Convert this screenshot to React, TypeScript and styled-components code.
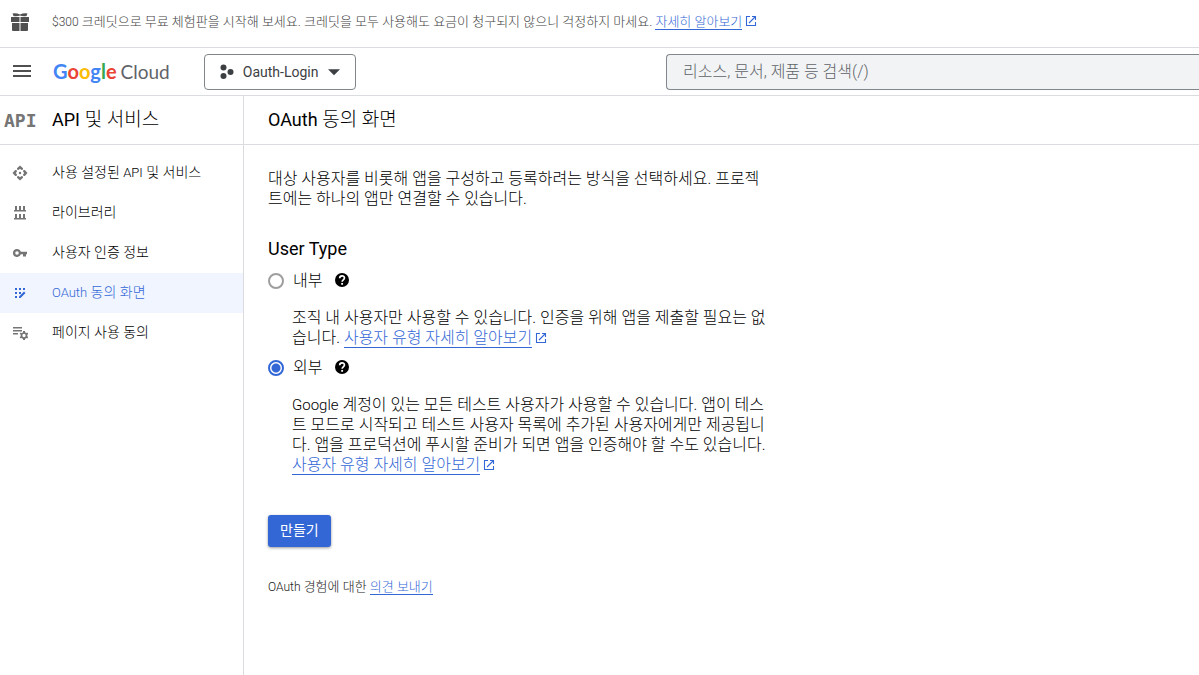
import React from "react";
import styled, { createGlobalStyle } from "styled-components";

const blue = "#3367d6";
const line = "#dadce0";

const GlobalStyle = createGlobalStyle`
  *, *::before, *::after { box-sizing: border-box; }
  body {
    margin: 0;
    background: #fff;
    color: #000;
    font-family: Roboto, "Noto Sans CJK KR", sans-serif;
    font-size: 16px;
    font-weight: 300;
    line-height: 20px;
  }
  h1, h2, p, ul { margin: 0; padding: 0; }
  svg { display: block; flex: none; }
`;

const Page = styled.div`
  display: flex;
  flex-direction: column;
  min-height: 100vh;
`;

const Banner = styled.div`
  display: flex;
  align-items: center;
  height: 48px;
  padding: 0 10px 4px;
  gap: 22px;
  border-bottom: 1px solid ${line};
  color: #424242;
  font-size: 13px;
`;

const Latin = styled.span<{ $size: number; $weight?: number }>`
  font-size: ${(p) => p.$size}px;
  font-weight: ${(p) => p.$weight ?? 300};
`;

const Link = styled.a`
  color: ${blue};
  text-decoration: none;
  span {
    border-bottom: 1px solid ${blue};
  }
  svg {
    display: inline-block;
    margin-left: 3px;
    vertical-align: -1px;
  }
`;

const Header = styled.header`
  display: flex;
  align-items: center;
  height: 48px;
  border-bottom: 1px solid ${line};
`;

const HeaderStart = styled.div`
  display: flex;
  flex: 5 0 0;
  align-items: center;
`;

const IconButton = styled.button`
  margin-left: 10px;
  padding: 0;
  border: 0;
  background: none;
  color: #505050;
`;

const Logo = styled.a`
  display: flex;
  align-items: baseline;
  gap: 4px;
  margin: 0 34px 0 19px;
  color: #5f6368;
  font-family: Lato, sans-serif;
  font-size: 19px;
  font-weight: 400;
  line-height: 24px;
  text-decoration: none;
`;

const Brand = styled.span`
  font-size: 20px;
  font-weight: 700;
`;

const Tint = styled.span<{ $color: string }>`
  color: ${(p) => p.$color};
`;

const ProjectButton = styled.button`
  display: flex;
  align-items: center;
  height: 36px;
  padding: 0 13px 0 14px;
  border: 1px solid #80868b;
  border-radius: 4px;
  background: #fff;
  color: #3c4043;
  font: 400 14px Roboto, sans-serif;
  gap: 8px;
`;

const SearchForm = styled.form`
  flex: 4 0 0;
`;

const Search = styled.input`
  display: block;
  width: 100%;
  height: 36px;
  padding: 0 16px;
  border: 1px solid #80868b;
  border-right: 0;
  border-radius: 4px 0 0 4px;
  background: #f1f3f4;
  font: 300 16px Roboto, "Noto Sans CJK KR", sans-serif;
  &::placeholder { color: #5f6368; opacity: 1; }
`;

const Body = styled.div`
  display: flex;
  flex: 1;
`;

const Sidebar = styled.nav`
  flex: none;
  width: 244px;
  border-right: 1px solid ${line};
`;

const TitleBar = styled.div`
  display: flex;
  align-items: center;
  height: 49px;
  border-bottom: 1px solid ${line};
`;

const SectionIcon = styled.span`
  width: 52px;
  padding-left: 4px;
  color: #757575;
  font: 700 18px "DejaVu Sans Mono", monospace;
`;

const Title = styled.h1`
  padding-left: 24px;
  font-size: 19px;
  font-weight: 300;
`;

const SectionTitle = styled.h2`
  font-size: 19px;
  font-weight: 300;
`;

const NavList = styled.ul`
  padding-top: 8px;
  list-style: none;
`;

const NavLink = styled.a<{ $active?: boolean }>`
  display: flex;
  align-items: center;
  height: 40px;
  padding-left: 12px;
  gap: 24px;
  background: ${(p) => (p.$active ? "#f0f5ff" : "transparent")};
  color: ${(p) => (p.$active ? blue : "#000")};
  font-size: 14px;
  text-decoration: none;
  svg { color: ${(p) => (p.$active ? blue : "#757575")}; }
`;

const NavLabel = styled.span`
  padding-bottom: 2px;
`;

const Main = styled.main`
  flex: 1;
`;

const Content = styled.form`
  max-width: 552px;
  padding: 24px;
`;

const UserTypeGroup = styled.fieldset`
  margin: 29px 0 0;
  padding: 0;
  border: 0;
`;

const Legend = styled.legend`
  padding: 0;
  font-size: 18px;
  font-weight: 400;
  line-height: 22px;
`;

const Option = styled.div`
  display: flex;
  align-items: center;
  height: 28px;
  margin-top: 6px;
  ${Legend} + & { margin-top: 7px; }
`;

const Radio = styled.input`
  appearance: none;
  width: 16px;
  height: 16px;
  margin: 0;
  border: 2px solid #9e9e9e;
  border-radius: 50%;
  &:checked {
    border-color: ${blue};
    background: radial-gradient(circle, ${blue} 4px, #fff 5px);
  }
`;

const OptionLabel = styled.label`
  padding: 0 13px 0 9px;
`;

const HelpBadge = styled.span`
  padding-bottom: 2px;
`;

const Description = styled.p`
  margin-top: 13px;
  padding-left: 24px;
`;

const CreateButton = styled.button`
  height: 32px;
  margin-top: 40px;
  padding: 0 12px 4px;
  border: 0;
  border-radius: 3px;
  background: ${blue};
  box-shadow: 0 1px 3px rgba(0, 0, 0, 0.4);
  color: #fff;
  font: 400 14px Roboto, "Noto Sans CJK KR", sans-serif;
`;

const Feedback = styled.p`
  margin-top: 30px;
  color: #212121;
  font-size: 13px;
`;

function Svg({ size = 16, box = 24, children }: { size?: number; box?: number; children: React.ReactNode }) {
  return (
    <svg width={size} height={size} viewBox={`0 0 ${box} ${box}`} fill="currentColor" aria-hidden="true">
      {children}
    </svg>
  );
}

const ExternalIcon = () => (
  <Svg size={12} box={12}>
    <path d="M5 1.500H1.500v9h9V7M7 1.500h3.500V5M10.500 1.500 4 8" fill="none" stroke={blue} strokeWidth="1.100" />
  </Svg>
);

const GiftIcon = () => (
  <Svg size={20} box={20}>
    <path
      fill="#505050"
      d="M1 5h8.500v5H1zM10.500 5H19v5h-8.500zM2 11h7.500v8H3a1 1 0 0 1-1-1zM10.500 11H18v7a1 1 0 0 1-1 1h-6.500zM2.500 1.500Q6 .5 10 2.600 14 .5 17.500 1.500L16.500 4Q13 4.500 10 3.600 7 4.500 3.500 4z"
    />
  </Svg>
);

const HelpIcon = () => (
  <HelpBadge>
    <Svg size={14} box={20}>
      <path d="M10 0a10 10 0 1 0 0 20 10 10 0 0 0 0-20z" fill="#000" />
      <path d="M6.700 7.500C6.700 3 13.500 3 13.500 7.300 13.500 9.800 10.200 10 10.200 12.500" fill="none" stroke="#fff" strokeWidth="2.400" />
      <path d="M8.900 14.200h2.600v2.600H8.900z" fill="#fff" />
    </Svg>
  </HelpBadge>
);

const ApiIcon = () => (
  <Svg box={16}>
    <path d="M8 .5 11 3.200V4.500L9.500 5 8 3.800 6.500 5 5 4.500V3.200zM8 15.500 5 12.800V11.500L6.500 11 8 12.200 9.500 11l1.500.5v1.300zM.5 8 3.200 5H4.500L5 6.500 3.800 8 5 9.500 4.500 11H3.200zM15.500 8l-2.700 3h-1.300L11 9.500 12.200 8 11 6.500l.5-1.500h1.300z" />
    <circle cx="8" cy="8" r="1.200" />
  </Svg>
);

const LibraryIcon = () => (
  <Svg box={16}>
    <path d="M3 1h2v4h2V1h2v4h2V1h2v4h1v1.500H2V5h1zM3 9h2v4h2V9h2v4h2V9h2v4h1v1.500H2V13h1z" />
  </Svg>
);

const KeyIcon = () => (
  <Svg box={16}>
    <path d="M5 4a4 4 0 1 0 3.800 5.200H11V11.500h3V9.200h1V6.800H8.800A4 4 0 0 0 5 4zm0 2.200a1.800 1.800 0 1 1 0 3.600 1.800 1.800 0 0 1 0-3.600z" />
  </Svg>
);

const ConsentIcon = () => (
  <Svg box={16}>
    <path d="M3 3h2v2H3zM7 3h2v2H7zM11 3h2v2h-2zM3 7h2v2H3zM7 7h2v2H7zM3 11h2v2H3zM12 6.500l1.500 1.500-5 5H7v-1.500z" />
  </Svg>
);

const AgreementIcon = () => (
  <Svg box={16}>
    <path d="M1 2h9v1.600H1zM1 5h9v1.600H1zM1 8h5v1.600H1z" />
    <path d="M12 6v9M8.100 8.250l7.800 4.500M8.100 12.750l7.800-4.500" stroke="currentColor" strokeWidth="2" />
    <circle cx="12" cy="10.500" r="2.500" fill="#fff" stroke="currentColor" strokeWidth="1.700" />
  </Svg>
);

const navItems = [
  { icon: <ApiIcon />, label: <>사용 설정된 <Latin $size={13}>API</Latin> 및 서비스</> },
  { icon: <LibraryIcon />, label: "라이브러리" },
  { icon: <KeyIcon />, label: "사용자 인증 정보" },
  { icon: <ConsentIcon />, label: <><Latin $size={13}>OAuth</Latin> 동의 화면</>, active: true },
  { icon: <AgreementIcon />, label: "페이지 사용 동의" },
];

const logoLetters: [string, string][] = [
  ["G", "#4285f4"],
  ["o", "#ea4335"],
  ["o", "#fbbc04"],
  ["g", "#4285f4"],
  ["l", "#34a853"],
  ["e", "#ea4335"],
];

function ExternalLink({ children }: { children: React.ReactNode }) {
  return (
    <Link href="#">
      <span>{children}</span>
      <ExternalIcon />
    </Link>
  );
}

export default function App() {
  return (
    <Page>
      <GlobalStyle />
      <Banner>
        <GiftIcon />
        <p>
          <Latin $size={12}>$300</Latin> 크레딧으로 무료 체험판을 시작해 보세요. 크레딧을 모두 사용해도 요금이 청구되지 않으니 걱정하지 마세요.{" "}
          <ExternalLink>자세히 알아보기</ExternalLink>
        </p>
      </Banner>
      <Header>
        <HeaderStart>
          <IconButton type="button" aria-label="탐색 메뉴">
            <Svg size={24}>
              <path d="M3 5h18v2H3zm0 5h18v2H3zm0 5h18v2H3z" />
            </Svg>
          </IconButton>
          <Logo href="#">
            <Brand>
              {logoLetters.map(([letter, color], i) => (
                <Tint key={i} $color={color}>{letter}</Tint>
              ))}
            </Brand>
            <span>Cloud</span>
          </Logo>
          <ProjectButton type="button">
            <Svg box={16}>
              <circle cx="4.500" cy="3.500" r="3" />
              <circle cx="4.500" cy="12" r="3" />
              <circle cx="11.500" cy="8" r="3" />
            </Svg>
            Oauth-Login
            <Svg>
              <path d="M3 8h18l-9 9z" />
            </Svg>
          </ProjectButton>
        </HeaderStart>
        <SearchForm role="search">
          <Search type="search" aria-label="검색" placeholder="리소스, 문서, 제품 등 검색(/)" />
        </SearchForm>
      </Header>
      <Body>
        <Sidebar>
          <TitleBar>
            <SectionIcon aria-hidden="true">API</SectionIcon>
            <SectionTitle><Latin $size={18} $weight={400}>API</Latin> 및 서비스</SectionTitle>
          </TitleBar>
          <NavList>
            {navItems.map((item, i) => (
              <li key={i}>
                <NavLink href="#" $active={item.active}>
                  {item.icon}
                  <NavLabel>{item.label}</NavLabel>
                </NavLink>
              </li>
            ))}
          </NavList>
        </Sidebar>
        <Main>
          <TitleBar>
            <Title><Latin $size={18} $weight={400}>OAuth</Latin> 동의 화면</Title>
          </TitleBar>
          <Content>
            <p>
              대상 사용자를 비롯해 앱을 구성하고 등록하려는 방식을 선택하세요. 프로젝트에는 하나의 앱만 연결할 수 있습니다.
            </p>
            <UserTypeGroup>
              <Legend>User Type</Legend>
              <Option>
                <Radio type="radio" id="internal" name="userType" />
                <OptionLabel htmlFor="internal">내부</OptionLabel>
                <HelpIcon />
              </Option>
              <Description>
                조직 내 사용자만 사용할 수 있습니다. 인증을 위해 앱을 제출할 필요는 없습니다.{" "}
                <ExternalLink>사용자 유형 자세히 알아보기</ExternalLink>
              </Description>
              <Option>
                <Radio type="radio" id="external" name="userType" defaultChecked />
                <OptionLabel htmlFor="external">외부</OptionLabel>
                <HelpIcon />
              </Option>
              <Description>
                <Latin $size={15}>Google</Latin> 계정이 있는 모든 테스트 사용자가 사용할 수 있습니다. 앱이 테스트 모드로 시작되고 테스트 사용자 목록에 추가된 사용자에게만 제공됩니다. 앱을 프로덕션에 푸시할 준비가 되면 앱을 인증해야 할 수도 있습니다.{" "}
                <ExternalLink>사용자 유형 자세히 알아보기</ExternalLink>
              </Description>
            </UserTypeGroup>
            <CreateButton type="button">만들기</CreateButton>
            <Feedback>
              <Latin $size={12}>OAuth</Latin> 경험에 대한 <Link href="#"><span>의견 보내기</span></Link>
            </Feedback>
          </Content>
        </Main>
      </Body>
    </Page>
  );
}
